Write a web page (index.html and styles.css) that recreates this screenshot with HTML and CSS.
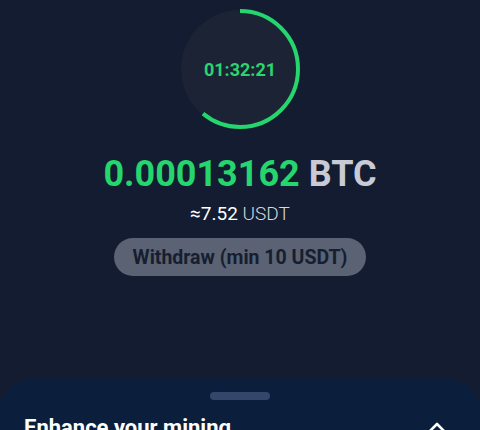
FILE: index.html
```html
<!DOCTYPE html>
<html lang="en">
<head>
    <meta charset="UTF-8">
    <meta name="viewport" content="width=device-width, initial-scale=1.0">
    <title>Mining</title>
    <link rel="stylesheet" href="styles.css">
</head>
<body>
    <div class="screen">
        <div class="top">
            <div class="timer">
                <svg class="ring" width="122" height="122" viewBox="0 0 122 122">
                    <circle class="ring-bg" cx="61" cy="61" r="59"></circle>
                    <circle class="ring-arc" cx="61" cy="61" r="58"></circle>
                </svg>
                <span class="timer-text">01:32:21</span>
            </div>
            <div class="amount"><span class="amount-value">0.00013162</span> <span class="amount-coin">BTC</span></div>
            <div class="approx">≈7.52 <span class="approx-unit">USDT</span></div>
            <button class="withdraw" type="button">Withdraw (min 10 USDT)</button>
        </div>
        <div class="sheet">
            <div class="handle"></div>
            <div class="sheet-head">
                <h3>Enhance your mining</h3>
                <svg class="chevron" width="24" height="24" viewBox="0 0 24 24">
                    <path d="M3 17 L12 8 L21 17" fill="none" stroke="#ffffff" stroke-width="2.6" stroke-linecap="round" stroke-linejoin="round"></path>
                </svg>
            </div>
        </div>
    </div>
</body>
</html>
```

FILE: styles.css
```css
body {
    margin: 0;
    font-family: Roboto, "Liberation Sans", sans-serif;
    background-color: #131c30;
    color: #ffffff;
}
.screen {
    height: 430px;
    overflow: hidden;
    display: flex;
    flex-direction: column;
}
.top {
    flex: none;
    height: 380px;
    box-sizing: border-box;
    padding-top: 8px;
    display: flex;
    flex-direction: column;
    align-items: center;
}
.timer {
    position: relative;
    width: 122px;
    height: 122px;
    display: flex;
    align-items: center;
    justify-content: center;
}
.ring {
    position: absolute;
    top: 0;
    left: 0;
}
.ring-bg {
    fill: #1b2335;
}
.ring-arc {
    fill: none;
    stroke: #25d56d;
    stroke-width: 4;
    stroke-dasharray: 222 400;
    transform: rotate(-90deg);
    transform-origin: 61px 61px;
}
.timer-text {
    position: relative;
    color: #2bd46f;
    font-size: 18px;
    font-weight: 700;
}
.amount {
    margin-top: 22px;
    font-size: 36px;
    font-weight: 700;
    line-height: 44px;
}
.amount-value {
    color: #25d56d;
}
.amount-coin {
    color: #c8cbd5;
}
.approx {
    margin-top: 6px;
    font-size: 19px;
    line-height: 24px;
    color: #ffffff;
}
.approx-unit {
    font-weight: 300;
    color: #d6d9e0;
}
.withdraw {
    margin-top: 12px;
    width: 252px;
    height: 38px;
    border: none;
    border-radius: 19px;
    background: #5a6273;
    color: #161e30;
    font-family: inherit;
    font-size: 19.5px;
    font-weight: 700;
    padding: 0;
}
.sheet {
    flex: 1;
    background: #0b1f3d;
    border-radius: 30px 30px 0 0;
    padding: 12px 24px 0;
}
.handle {
    width: 60px;
    height: 8px;
    margin: 0 auto;
    border-radius: 4px;
    background: #34476a;
}
.sheet-head {
    margin-top: 14px;
    display: flex;
    align-items: center;
    justify-content: space-between;
}
.sheet-head h3 {
    margin: 0;
    font-size: 22px;
    line-height: 28px;
    font-weight: 700;
}
.chevron {
    margin-right: 7px;
}
```
